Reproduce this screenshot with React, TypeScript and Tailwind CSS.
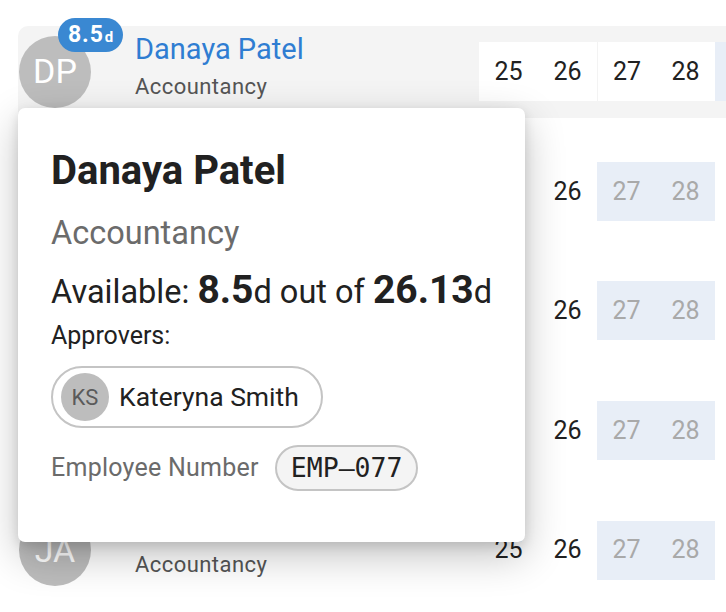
import React from "react";

const font = { fontFamily: "Roboto, 'Noto Sans', sans-serif" };

const cell = "flex w-[59px] items-center justify-center text-[25px]";

function DateCells({ variant }: { variant: "head" | "hidden" | "last" }) {
  if (variant === "head") {
    return (
      <div className="flex h-[59px] shrink-0">
        <div className="flex h-full bg-white">
          <div className={`${cell} text-[#212121]`}>25</div>
          <div className={`${cell} text-[#212121]`}>26</div>
          <div className={`${cell} border-l border-[#f3f3f3] text-[#212121]`}>27</div>
          <div className={`${cell} text-[#212121]`}>28</div>
        </div>
        <div className="h-full w-[59px] bg-[#e8eef7]" />
      </div>
    );
  }
  return (
    <div className="flex h-[59px] shrink-0">
      <div className={`${cell} text-[#212121]`}>{variant === "last" ? "25" : ""}</div>
      <div className={`${cell} text-[#212121]`}>26</div>
      <div className="flex h-full bg-[#e8eef7]">
        <div className={`${cell} text-[#a9a9a9]`}>27</div>
        <div className={`${cell} text-[#a9a9a9]`}>28</div>
      </div>
      <div className="h-full w-[59px]" />
    </div>
  );
}

function Row({
  initials,
  name,
  sub,
  first,
  variant,
}: {
  initials?: string;
  name?: string;
  sub?: string;
  first?: boolean;
  variant: "head" | "hidden" | "last";
}) {
  return (
    <div className="flex h-[119.6px] shrink-0 items-center">
      <div className={`flex h-[92px] w-full items-center rounded-tl-[10px] rounded-bl-[4px] pl-[1px] ${first ? "bg-[#f4f4f4]" : ""}`}>
        <div className="relative shrink-0">
          <div className="flex h-[72px] w-[72px] items-center justify-center rounded-full bg-[#bdbdbd] text-[34px] text-white">
            {initials}
          </div>
          {first && (
            <div className="absolute left-[39px] top-[-18px] flex h-[34px] items-center rounded-full bg-[#3a88d2] pl-[10px] pr-[10px] text-white">
              <span className="text-[23px] font-bold leading-none tracking-[0.04em]">8.5</span>
              <span className="ml-[1px] mt-[5px] text-[15px] font-bold leading-none">d</span>
            </div>
          )}
        </div>
        <div className="ml-[44px] flex w-[300px] shrink-0 flex-col pb-[12px]">
          <div className="h-[36px] text-[29px] leading-[36px] text-[#2f7dd2]">{name}</div>
          <div className="mt-[6px] h-[28px] text-[22px] leading-[28px] tracking-[0.02em] text-[#555555]">{sub}</div>
        </div>
        <div className="ml-[44px] shrink-0">
          <DateCells variant={variant} />
        </div>
      </div>
    </div>
  );
}

export default function App() {
  return (
    <div className="relative h-[612px] w-[726px] overflow-hidden bg-white" style={font}>
      <div className="flex flex-col pl-[18px] pt-[12px]">
        <Row initials="DP" name="Danaya Patel" sub="Accountancy" first variant="head" />
        <Row variant="hidden" />
        <Row variant="hidden" />
        <Row variant="hidden" />
        <Row initials="JA" sub="Accountancy" variant="last" />
      </div>

      <div className="absolute left-[18px] top-[108px] h-[434px] w-[507px] rounded-[7px] bg-white px-[33px] pt-[40px] shadow-[0_14px_40px_rgba(0,0,0,0.24),0_4px_12px_rgba(0,0,0,0.12)]">
        <div className="text-[40px] font-bold leading-[46px] text-[#212121]">Danaya Patel</div>
        <div className="mt-[20px] text-[32.5px] leading-[38px] text-[#6b6b6b]">Accountancy</div>
        <div className="mt-[16px] whitespace-nowrap text-[32.5px] leading-[44px] text-[#212121]">
          Available: <span className="text-[39px] font-bold leading-[44px]">8.5</span>d out of{" "}
          <span className="text-[39px] font-bold leading-[44px]">26.13</span>d
        </div>
        <div className="mt-[7px] text-[25px] leading-[30px] text-[#212121]">Approvers:</div>
        <div className="mt-[15px] flex">
          <div className="flex h-[62px] items-center rounded-full border-2 border-[#c4c4c4] pl-[8px] pr-[22px]">
            <div className="flex h-[48px] w-[48px] items-center justify-center rounded-full bg-[#bdbdbd] text-[22px] text-[#5a5a5a]">
              KS
            </div>
            <span className="ml-[10px] text-[26.5px] text-[#212121]">Kateryna Smith</span>
          </div>
        </div>
        <div className="mt-[17px] flex items-center">
          <span className="text-[25px] tracking-[0.01em] text-[#6b6b6b]">Employee Number</span>
          <div
            className="ml-[16px] flex h-[46px] items-center rounded-full border-2 border-[#c4c4c4] bg-[#f4f4f4] px-[14px] text-[26.5px] text-[#212121]"
            style={{ fontFamily: "'DejaVu Sans Mono', monospace" }}
          >
            EMP‒077
          </div>
        </div>
      </div>
    </div>
  );
}
